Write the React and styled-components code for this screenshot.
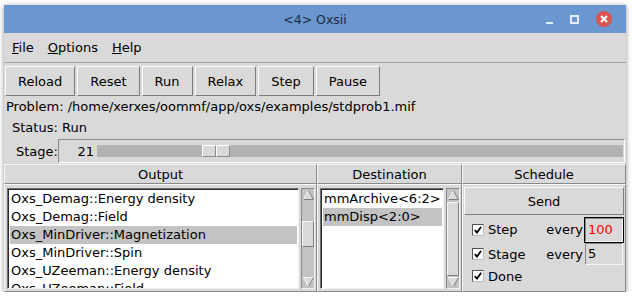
import React from "react";
import styled, { createGlobalStyle } from "styled-components";

const GlobalStyle = createGlobalStyle`
  html, body {
    margin: 0;
    padding: 0;
    background: #ffffff;
  }
  body {
    font-family: "DejaVu Sans", "Liberation Sans", sans-serif;
    font-size: 13px;
    color: #000;
  }
`;

const Window = styled.div`
  margin: 5px 0 0 4px;
  width: 622px;
  height: 287px;
  background: #d9d9d9;
  box-shadow: 0 1px 5px rgba(0, 0, 0, 0.45);
  display: flex;
  flex-direction: column;
  overflow: hidden;
`;

const TitleBar = styled.div`
  height: 28px;
  flex-shrink: 0;
  background: #6a97d0;
  display: grid;
  grid-template-columns: 1fr auto 1fr;
  align-items: center;
  color: #1d2a3a;
  font-size: 12.5px;
`;

const Title = styled.span`
  grid-column: 2;
`;

const Controls = styled.div`
  grid-column: 3;
  justify-self: end;
  display: flex;
  align-items: center;
  gap: 12px;
  padding-right: 14px;
`;

const MinIcon = styled.div`
  width: 7px;
  height: 2px;
  margin-top: 8px;
  background: #e3ebf6;
`;

const MaxIcon = styled.div`
  width: 5px;
  height: 5px;
  border: 2px solid #e3ebf6;
  margin: 0 5px;
`;

const CloseIcon = styled.div`
  width: 16px;
  height: 16px;
  border-radius: 50%;
  background: #d9534f;
  display: flex;
  align-items: center;
  justify-content: center;
`;

const MenuBar = styled.div`
  height: 29px;
  flex-shrink: 0;
  border-bottom: 1px solid #a3a3a3;
  display: flex;
  align-items: center;
  padding-left: 1px;
`;

const MenuItem = styled.span`
  padding: 0 7px;
`;

const Key = styled.span`
  text-decoration: underline;
`;

const Toolbar = styled.div`
  display: flex;
  gap: 2px;
  padding: 3px 0 0 1px;
  flex-shrink: 0;
`;

const Button = styled.div`
  height: ${(p) => p.$h || 28}px;
  padding: 0 12px;
  display: flex;
  align-items: center;
  justify-content: center;
  border: 1px solid;
  border-color: #fbfbfb #7d7d7d #7d7d7d #fbfbfb;
  background: #d9d9d9;
  flex-shrink: 0;
`;

const InfoLine = styled.div`
  height: ${(p) => p.$h}px;
  line-height: ${(p) => p.$h}px;
  padding-left: ${(p) => p.$indent}px;
  flex-shrink: 0;
`;

const StageRow = styled.div`
  margin-top: 1px;
  height: 24px;
  display: flex;
  align-items: center;
  flex-shrink: 0;
`;

const StageLabel = styled.span`
  padding-left: 12px;
  width: 42px;
`;

const ScaleFrame = styled.div`
  flex: 1;
  margin-right: 1px;
  height: 22px;
  border: 1px solid;
  border-color: #8a8a8a #ffffff #ffffff #8a8a8a;
  display: flex;
  align-items: center;
`;

const ScaleValue = styled.span`
  width: 35px;
  text-align: right;
  padding-right: 3px;
`;

const Trough = styled.div`
  flex: 1;
  height: 12px;
  margin-right: 1px;
  background: #b3b3b3;
  display: flex;
  padding-left: 105px;
`;

const Thumb = styled.div`
  width: 12px;
  height: 10px;
  background: #d9d9d9;
  border: 1px solid;
  border-color: #ffffff #8a8a8a #8a8a8a #ffffff;
`;

const Headers = styled.div`
  margin-top: 1px;
  height: 20px;
  display: grid;
  grid-template-columns: 313px 145px 1fr;
  flex-shrink: 0;
`;

const Header = styled.div`
  display: flex;
  align-items: center;
  justify-content: center;
  border: 1px solid;
  border-color: #f6f6f6 #8a8a8a #8a8a8a #f6f6f6;
`;

const Panels = styled.div`
  flex: 1;
  display: grid;
  grid-template-columns: 313px 145px 1fr;
  min-height: 0;
`;

const ListPanel = styled.div`
  display: flex;
  gap: 2px;
  padding: 3px 1px 2px 2px;
  border: 1px solid;
  border-color: #f6f6f6 #8a8a8a #8a8a8a #f6f6f6;
  min-height: 0;
`;

const ListBox = styled.div`
  flex: 1;
  background: #ffffff;
  border: 1px solid;
  border-color: #6e6e6e #f2f2f2 #f2f2f2 #6e6e6e;
  box-shadow: inset 1px 1px 0 #2a2a2a;
  padding: 1px 1px 0 2px;
  overflow: hidden;
`;

const Item = styled.div`
  height: 18px;
  line-height: 18px;
  white-space: nowrap;
  padding-left: 1px;
  background: ${(p) => (p.$selected ? "#c3c3c3" : "transparent")};
`;

const ScrollBar = styled.div`
  width: 12px;
  background: #c3c3c3;
  border: 1px solid;
  border-color: #8a8a8a #f2f2f2 #f2f2f2 #8a8a8a;
  display: flex;
  flex-direction: column;
  align-items: center;
  padding: 1px 0;
`;

const ScrollTrack = styled.div`
  flex: 1;
  width: 100%;
  display: flex;
  flex-direction: column;
`;

const ScrollThumb = styled.div`
  margin-top: ${(p) => p.$top}px;
  height: ${(p) => p.$size}px;
  background: #d9d9d9;
  border: 1px solid;
  border-color: #f6f6f6 #7d7d7d #7d7d7d #f6f6f6;
`;

const SchedulePanel = styled.div`
  display: flex;
  flex-direction: column;
  padding: 2px 1px 0 1px;
  border: 1px solid;
  border-color: #f6f6f6 #8a8a8a #8a8a8a #f6f6f6;
`;

const ScheduleGrid = styled.div`
  display: grid;
  grid-template-columns: 1fr auto 39px;
  grid-auto-rows: 25px 24px 20px;
  column-gap: 2px;
  align-items: center;
  padding: 2px 0 0 8px;
`;

const Check = styled.label`
  display: flex;
  align-items: center;
  gap: 4px;
`;

const Box = styled.span`
  width: 10px;
  height: 10px;
  background: #ffffff;
  border: 1px solid;
  border-color: #555 #bbb #bbb #555;
  display: flex;
  align-items: center;
  justify-content: center;
`;

const Every = styled.span``;

const Entry = styled.div`
  height: ${(p) => (p.$focus ? 22 : 20)}px;
  line-height: ${(p) => (p.$focus ? 22 : 20)}px;
  padding-left: 2px;
  color: ${(p) => (p.$focus ? "#ff0000" : "#000")};
  border: 1px solid;
  border-color: #8a8a8a #f6f6f6 #f6f6f6 #8a8a8a;
  margin-right: 1px;
  ${(p) => (p.$focus ? "outline: 1px solid #000;" : "")}
`;

const Arrow = ({ down }) => (
  <svg width="11" height="10" viewBox="0 0 11 10">
    {down ? (
      <>
        <polygon points="0.5,0.5 10.5,0.5 5.5,9.5" fill="#d9d9d9" />
        <polyline points="0.5,0.5 10.5,0.5" stroke="#f8f8f8" fill="none" />
        <polyline points="0.5,0.5 5.5,9.5" stroke="#f8f8f8" fill="none" />
        <polyline points="10.5,0.5 5.5,9.5" stroke="#7d7d7d" fill="none" />
      </>
    ) : (
      <>
        <polygon points="5.5,0.5 10.5,9.5 0.5,9.5" fill="#d9d9d9" />
        <polyline points="5.5,0.5 0.5,9.5" stroke="#f8f8f8" fill="none" />
        <polyline points="5.5,0.5 10.5,9.5 0.5,9.5" stroke="#7d7d7d" fill="none" />
      </>
    )}
  </svg>
);

const Scroll = ({ top, size }) => (
  <ScrollBar>
    <Arrow />
    <ScrollTrack>
      <ScrollThumb $top={top} $size={size} />
    </ScrollTrack>
    <Arrow down />
  </ScrollBar>
);

const Tick = () => (
  <svg width="8" height="8" viewBox="0 0 8 8">
    <path d="M0.8 4.2 L3 6.6 L7.2 0.8" stroke="#000" strokeWidth="1.8" fill="none" />
  </svg>
);

const outputs = [
  "Oxs_Demag::Energy density",
  "Oxs_Demag::Field",
  "Oxs_MinDriver::Magnetization",
  "Oxs_MinDriver::Spin",
  "Oxs_UZeeman::Energy density",
  "Oxs_UZeeman::Field",
];

const destinations = ["mmArchive<6:2>", "mmDisp<2:0>"];

const App = () => {
  return (
    <>
      <GlobalStyle />
      <Window>
        <TitleBar>
          <Title>&lt;4&gt; Oxsii</Title>
          <Controls>
            <MinIcon />
            <MaxIcon />
            <CloseIcon>
              <svg width="8" height="8" viewBox="0 0 8 8">
                <path d="M1 1 L7 7 M7 1 L1 7" stroke="#fff" strokeWidth="2" />
              </svg>
            </CloseIcon>
          </Controls>
        </TitleBar>
        <MenuBar>
          <MenuItem><Key>F</Key>ile</MenuItem>
          <MenuItem><Key>O</Key>ptions</MenuItem>
          <MenuItem><Key>H</Key>elp</MenuItem>
        </MenuBar>
        <Toolbar>
          {["Reload", "Reset", "Run", "Relax", "Step", "Pause"].map((b) => (
            <Button key={b}>{b}</Button>
          ))}
        </Toolbar>
        <InfoLine $h={22} $indent={2}>
          Problem: /home/xerxes/oommf/app/oxs/examples/stdprob1.mif
        </InfoLine>
        <InfoLine $h={20} $indent={8}>
          Status: Run
        </InfoLine>
        <StageRow>
          <StageLabel>Stage:</StageLabel>
          <ScaleFrame>
            <ScaleValue>21</ScaleValue>
            <Trough>
              <Thumb />
              <Thumb />
            </Trough>
          </ScaleFrame>
        </StageRow>
        <Headers>
          <Header>Output</Header>
          <Header>Destination</Header>
          <Header>Schedule</Header>
        </Headers>
        <Panels>
          <ListPanel>
            <ListBox>
              {outputs.map((o, i) => (
                <Item key={o} $selected={i === 2}>{o}</Item>
              ))}
            </ListBox>
            <Scroll top={21} size={24} />
          </ListPanel>
          <ListPanel>
            <ListBox>
              {destinations.map((d, i) => (
                <Item key={d} $selected={i === 1}>{d}</Item>
              ))}
            </ListBox>
            <Scroll top={2} size={72} />
          </ListPanel>
          <SchedulePanel>
            <Button $h={26}>Send</Button>
            <ScheduleGrid>
              <Check><Box><Tick /></Box>Step</Check>
              <Every>every</Every>
              <Entry $focus>100</Entry>
              <Check><Box><Tick /></Box>Stage</Check>
              <Every>every</Every>
              <Entry>5</Entry>
              <Check><Box><Tick /></Box>Done</Check>
            </ScheduleGrid>
          </SchedulePanel>
        </Panels>
      </Window>
    </>
  );
};

export default App;
